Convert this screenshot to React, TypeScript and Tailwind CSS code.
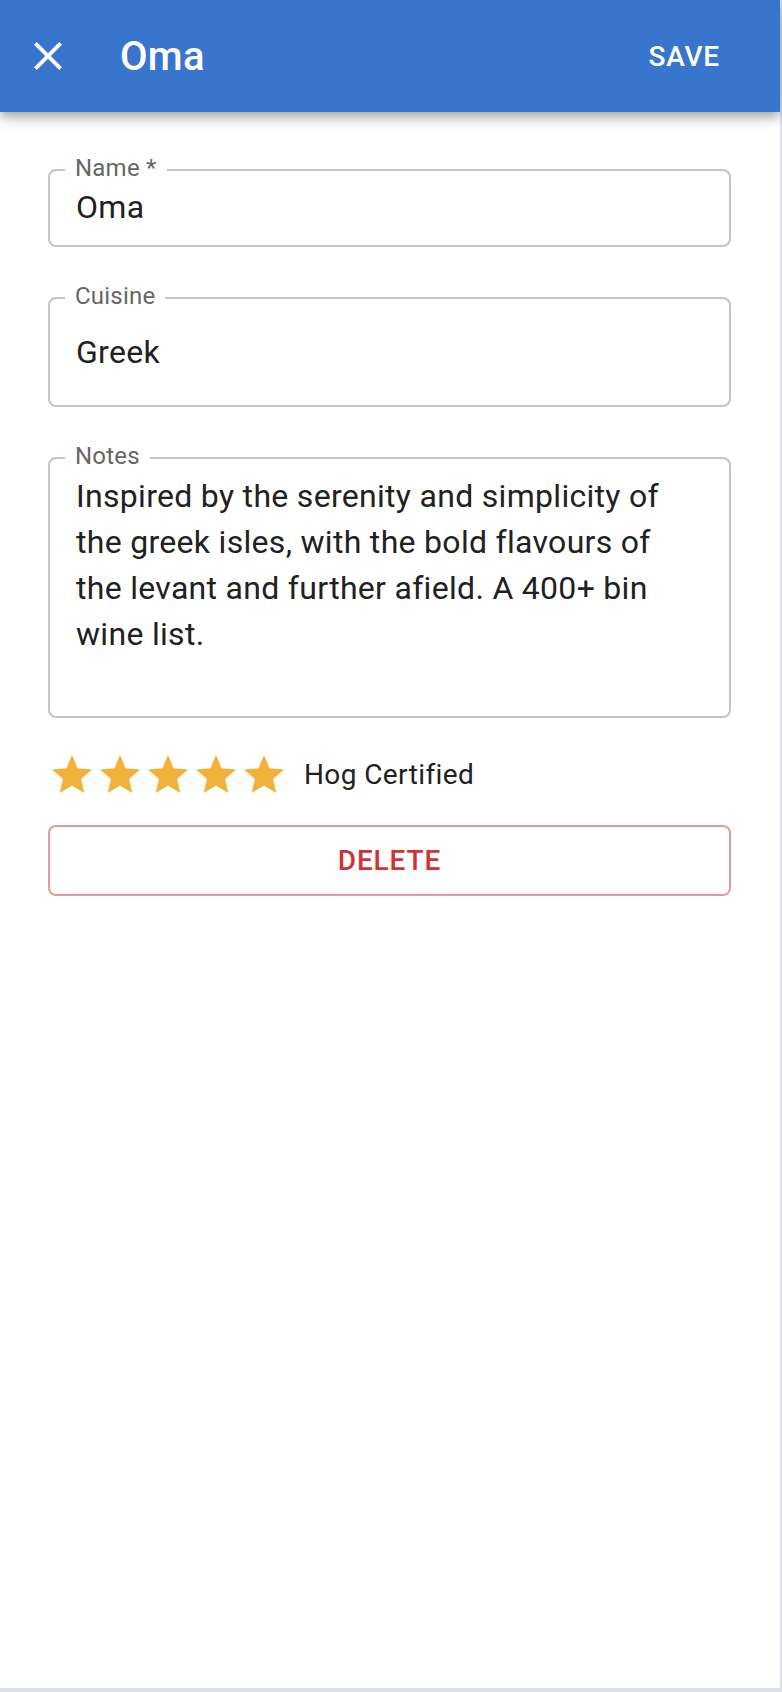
import React from "react";

const StarIcon = () => (
  <svg viewBox="0 0 24 24" className="w-[48px] h-[48px]" fill="#f1b13b">
    <path d="M12 17.27L18.18 21l-1.64-7.03L22 9.24l-7.19-.61L12 2 9.19 8.63 2 9.24l5.46 4.73L5.82 21z" />
  </svg>
);

const FieldLabel = ({ text }: { text: string }) => (
  <span className="absolute left-[15px] top-[-15px] bg-white px-[10px] text-[24px] leading-[24px] tracking-[0.22px] text-[#666666]">
    {text}
  </span>
);

export default function App() {
  return (
    <div
      className="w-[782px] h-[1692px] bg-[#dde0e8]"
      style={{ fontFamily: "Roboto, 'Liberation Sans', sans-serif" }}
    >
      <div className="w-[780px] h-[1688px] bg-white flex flex-col">
        {/* app bar */}
        <header className="relative z-10 h-[112px] bg-[#3875cd] flex items-center shadow-[0_4px_8px_-2px_rgba(0,0,0,0.2),0_8px_10px_0_rgba(0,0,0,0.14),0_2px_20px_0_rgba(0,0,0,0.12)]">
          <div className="ml-[24px] w-[48px] h-[48px] flex items-center justify-center">
            <svg viewBox="0 0 24 24" className="w-[48px] h-[48px]" fill="#ffffff">
              <path d="M19 6.41L17.59 5 12 10.59 6.41 5 5 6.41 10.59 12 5 17.59 6.41 19 12 13.41 17.59 19 19 17.59 13.41 12z" />
            </svg>
          </div>
          <h1 className="ml-[48px] mt-[2px] text-[40px] leading-[48px] font-medium tracking-[0.3px] text-white flex-1">
            Oma
          </h1>
          <button className="mr-[60px] mt-[2px] text-[28px] leading-[40px] font-medium text-white tracking-[0.8px]">
            SAVE
          </button>
        </header>

        <main className="flex flex-col pl-[48px] pr-[49px] pt-[57px]">
          {/* name */}
          <div className="relative border-2 border-[#c4c4c4] rounded-[8px] pl-[26px] pr-[26px] pt-[13px] pb-[15px]">
            <FieldLabel text="Name *" />
            <div className="text-[32px] leading-[46px] tracking-[0.3px] text-[#212121]">Oma</div>
          </div>

          {/* cuisine */}
          <div className="relative mt-[50px] border-2 border-[#c4c4c4] rounded-[8px] pl-[26px] pr-[26px] pt-[30px] pb-[30px]">
            <FieldLabel text="Cuisine" />
            <div className="text-[32px] leading-[46px] tracking-[0.3px] text-[#212121]">Greek</div>
          </div>

          {/* notes */}
          <div className="relative mt-[50px] border-2 border-[#c4c4c4] rounded-[8px] pl-[26px] pr-[26px] pt-[14px] pb-[13px]">
            <FieldLabel text="Notes" />
            <div className="h-[230px] text-[32px] leading-[46px] tracking-[0.3px] text-[#212121]">
              Inspired by the serenity and simplicity of
              <br />
              the greek isles, with the bold flavours of
              <br />
              the levant and further afield. A 400+ bin
              <br />
              wine list.
            </div>
          </div>

          {/* rating */}
          <div className="mt-[33px] flex items-center">
            <div className="flex">
              <StarIcon />
              <StarIcon />
              <StarIcon />
              <StarIcon />
              <StarIcon />
            </div>
            <span className="ml-[16px] text-[28px] leading-[40px] tracking-[0.4px] text-[#212121]">
              Hog Certified
            </span>
          </div>

          <button className="mt-[26px] h-[71px] border-2 border-[#e39a9a] rounded-[8px] text-[28px] font-medium tracking-[0.9px] text-[#cf3434]">
            DELETE
          </button>
        </main>
      </div>
    </div>
  );
}
